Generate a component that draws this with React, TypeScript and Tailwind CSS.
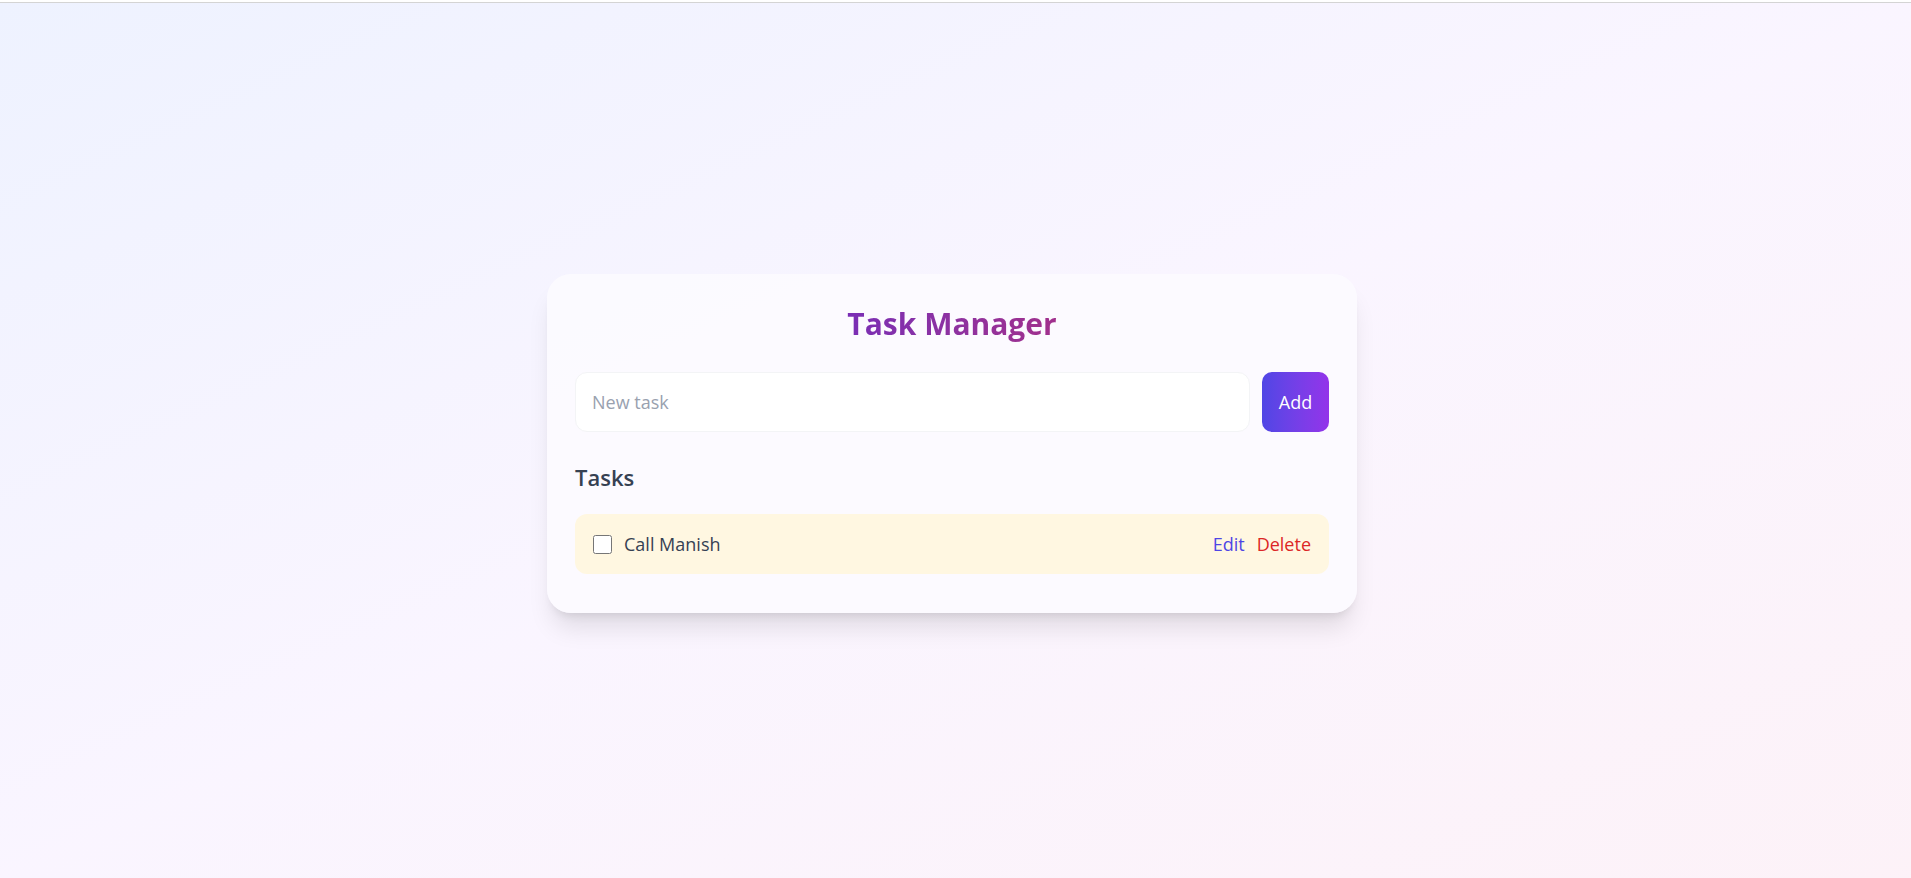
import React, { useState } from 'react';

interface Task {
  id: number;
  title: string;
  done: boolean;
}

export default function App() {
  const [tasks, setTasks] = useState<Task[]>([{ id: 1, title: 'Call Manish', done: false }]);
  const [draft, setDraft] = useState('');

  const addTask = () => {
    if (!draft.trim()) return;
    setTasks([...tasks, { id: Date.now(), title: draft.trim(), done: false }]);
    setDraft('');
  };

  const toggle = (id: number) =>
    setTasks(tasks.map(t => (t.id === id ? { ...t, done: !t.done } : t)));

  const remove = (id: number) => setTasks(tasks.filter(t => t.id !== id));

  return (
    <div className="min-h-screen flex flex-col font-['Open_Sans',sans-serif]">
      {/* top strip */}
      <div className="h-[3px] bg-white border-b border-[#d4d4d4]" />

      <div className="flex-1 flex items-center justify-center pt-[6px] pr-[7px] bg-gradient-to-br from-indigo-50 via-purple-50 to-pink-50">
        <div className="w-[810px] bg-[#fcfbff]/90 rounded-3xl shadow-xl px-7 pt-8 pb-[39px]">
          <div className="text-center mb-[30px]">
            <h1 className="inline-block text-[30px] leading-9 font-bold bg-gradient-to-r from-[#7a2db5] to-[#a12f8c] bg-clip-text text-transparent">
              Task Manager
            </h1>
          </div>

          {/* Nouvelle tâche */}
          <div className="flex gap-3 mb-[31px]">
            <input
              value={draft}
              onChange={e => setDraft(e.target.value)}
              onKeyDown={e => e.key === 'Enter' && addTask()}
              placeholder="New task"
              className="flex-1 h-[60px] px-4 rounded-xl border border-gray-100 bg-white text-lg text-gray-700 placeholder:text-gray-400 focus:outline-none"
            />
            <button
              type="button"
              onClick={addTask}
              className="w-[67px] h-[60px] rounded-[10px] bg-gradient-to-r from-[#4f46e5] to-[#9333ea] text-white text-lg"
            >
              Add
            </button>
          </div>

          <h2 className="text-[22px] leading-7 font-semibold text-gray-700 mb-[23px]">Tasks</h2>

          {/* Liste */}
          <ul className="space-y-3">
            {tasks.map(task => (
              <li
                key={task.id}
                className="h-[60px] flex items-center justify-between px-[18px] rounded-xl bg-[#fff7e1]"
              >
                <label className="flex items-center gap-3 text-lg text-gray-700">
                  <input
                    type="checkbox"
                    checked={task.done}
                    onChange={() => toggle(task.id)}
                    className="h-[19px] w-[19px] accent-indigo-600"
                  />
                  <span className={task.done ? 'line-through text-gray-400' : ''}>{task.title}</span>
                </label>
                <div className="flex items-center gap-3 text-lg">
                  <button type="button" className="text-[#4f46e5]">Edit</button>
                  <button type="button" className="text-[#dc2626]" onClick={() => remove(task.id)}>
                    Delete
                  </button>
                </div>
              </li>
            ))}
          </ul>
        </div>
      </div>
    </div>
  );
}
